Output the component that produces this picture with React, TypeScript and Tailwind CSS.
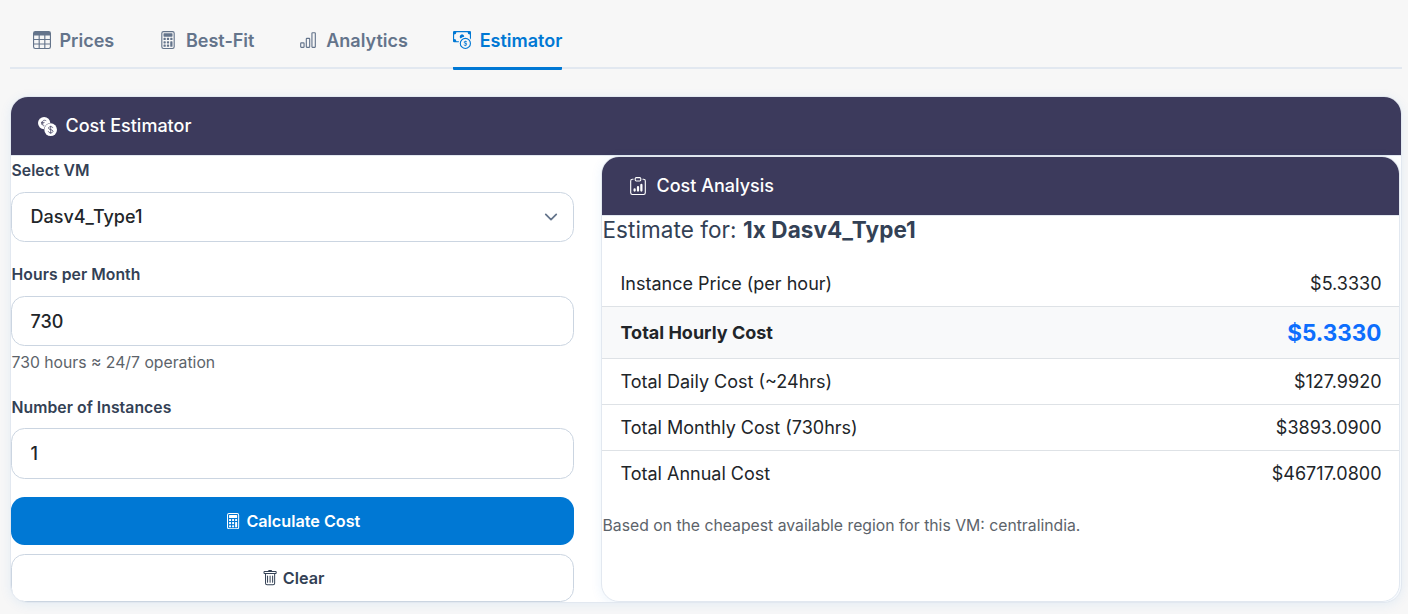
import React from "react";
import {
  BsTable,
  BsCalculator,
  BsBarChart,
  BsCashCoin,
  BsClipboardData,
  BsTrash,
} from "react-icons/bs";

function Coins() {
  return (
    <svg width="19" height="19" viewBox="0 0 18 18" fill="none">
      <circle cx="5.800" cy="5.800" r="5.800" fill="#fff" />
      <path d="M7.800 3.600C5.600 2.300 3.800 3.700 3.800 5.700S5 8.500 6 8.300M2.800 5.100h3.400M2.800 6.500h2.600" stroke="#3c3a5c" strokeWidth=".7" />
      <circle cx="12" cy="12" r="6.300" fill="#3c3a5c" />
      <circle cx="12" cy="12" r="6" fill="#fff" />
      <path d="M14.100 10.500c-.2-1-1-1.400-2.100-1.400s-2 .5-2 1.400c0 2 4.200 1 4.200 3 0 1-1 1.500-2.200 1.500s-2.100-.5-2.200-1.500M12 8.300v7.500" stroke="#3c3a5c" strokeWidth=".7" />
    </svg>
  );
}

const tabs = [
  { label: "Prices", Icon: BsTable },
  { label: "Best-Fit", Icon: BsCalculator },
  { label: "Analytics", Icon: BsBarChart },
  { label: "Estimator", Icon: BsCashCoin, active: true },
];

const rows = [
  { label: "Instance Price (per hour)", value: "$5.3330" },
  { label: "Total Hourly Cost", value: "$5.3330", total: true },
  { label: "Total Daily Cost (~24hrs)", value: "$127.9920" },
  { label: "Total Monthly Cost (730hrs)", value: "$3893.0900" },
  { label: "Total Annual Cost", value: "$46717.0800" },
];

function CardHeader({ icon, children }: { icon: React.ReactNode; children: React.ReactNode }) {
  return (
    <div className="flex h-[59px] shrink-0 items-center border-b border-[#e2e8f0] bg-[#3c3a5c] pl-[27px] text-[18px] font-medium text-white">
      <span className="w-[27.5px]">{icon}</span>
      <h2 className="pb-[2px]">{children}</h2>
    </div>
  );
}

const label = "block pl-[0.5px] text-[15.75px] font-semibold leading-6 tracking-[0.05px] text-[#334155]";
const field = "flex w-full items-center rounded-[13.5px] border border-[#cbd5e1] bg-white px-[18.5px] text-[18px] font-medium text-[#212529]";

export default function App() {
  return (
    <div className="h-[614px] overflow-hidden bg-[#f7f7f7] pl-[10px] pr-[6px] font-['Inter',sans-serif] text-[18px] text-[#212529]">
      <nav className="flex h-[69px] gap-[44.8px] border-b-2 border-[#e2e8f0] pl-[22.5px]">
        {tabs.map(({ label: name, Icon, active }) => (
          <button
            key={name}
            className={
              active
                ? "flex h-[70px] items-center gap-[9px] rounded-[1px] border-b-[3px] border-[#0078d4] pt-[13px] font-semibold text-[#0078d4]"
                : "flex h-[70px] items-center gap-[9px] border-b-[3px] border-transparent pt-[13px] font-semibold text-[#64748b]"
            }
          >
            <Icon size={18} />
            <span>{name}</span>
          </button>
        ))}
      </nav>

      <section className="mt-[27px] flex h-[507px] flex-col overflow-hidden rounded-[18px] border border-[#e2e8f0] bg-white shadow-[0_2px_12px_rgba(0,120,212,0.08)]">
        <CardHeader icon={<Coins />}>Cost Estimator</CardHeader>
        <div className="flex flex-1">
          <form className="w-[563px]">
            <label className={label + " mt-[3px]"}>Select VM</label>
            <div className={field + " mt-[9px] h-[50px] justify-between"}>
              <span className="pb-px">Dasv4_Type1</span>
              <svg className="mr-[-3px]" width="14" height="14" viewBox="0 0 16 16" fill="none" stroke="#64748b" strokeWidth="2" strokeLinecap="round" strokeLinejoin="round">
                <path d="m2 5 6 6 6-6" />
              </svg>
            </div>
            <label className={label + " mt-[21px]"}>Hours per Month</label>
            <div className={field + " mt-[9px] h-[50px]"}>730</div>
            <p className="mt-[5px] pl-[0.5px] text-[15.75px] leading-6 text-[#5c636a]">730 hours ≈ 24/7 operation</p>
            <label className={label + " mt-[21px]"}>Number of Instances</label>
            <div className={field + " mt-[8px] h-[51px]"}>1</div>
            <button type="button" className="mt-[18px] flex h-[48px] w-full items-center justify-center gap-[5px] rounded-[13.5px] bg-[#0078d4] pl-[0.5px] text-[16.2px] font-semibold text-white">
              <BsCalculator size={16.2} />
              <span>Calculate Cost</span>
            </button>
            <button type="button" className="mt-[9px] flex h-[48px] w-full items-center justify-center gap-[5px] rounded-[13.5px] border border-[#cbd5e1] bg-white pl-px text-[16.2px] font-semibold text-[#334155]">
              <BsTrash size={16.2} />
              <span>Clear</span>
            </button>
          </form>

          <section className="ml-[27px] mr-px h-[446px] flex-1 overflow-hidden rounded-[18px] border border-[#e2e8f0] bg-white shadow-[0_2px_12px_rgba(0,120,212,0.08)]">
            <CardHeader icon={<BsClipboardData size={18} />}>Cost Analysis</CardHeader>
            <h3 className="h-[45px] pl-[0.5px] text-[22.5px] leading-7 tracking-[0.07px] text-[#334155]">
              Estimate for: <strong className="font-bold">1x Dasv4_Type1</strong>
            </h3>
            <dl>
              {rows.map(({ label: name, value, total }, i) => (
                <div
                  key={name}
                  className={
                    total
                      ? "flex h-[52px] items-center justify-between border-b border-[#dee2e6] bg-[#f8f9fa] pl-[18.5px] pr-[17.5px]"
                      : i === rows.length - 1
                        ? "flex h-[45px] items-center justify-between pl-[18.5px] pr-[17.5px]"
                        : "flex h-[46px] items-center justify-between border-b border-[#dee2e6] pl-[18.5px] pr-[17.5px]"
                  }
                >
                  <dt className={total ? "font-bold" : ""}>{name}</dt>
                  <dd className={total ? "text-[22.5px] font-bold text-[#0d6efd]" : ""}>{value}</dd>
                </div>
              ))}
            </dl>
            <p className="mt-[18px] pl-[0.5px] text-[15.75px] leading-6 text-[#5c636a]">
              Based on the cheapest available region for this VM: centralindia.
            </p>
          </section>
        </div>
      </section>
    </div>
  );
}
